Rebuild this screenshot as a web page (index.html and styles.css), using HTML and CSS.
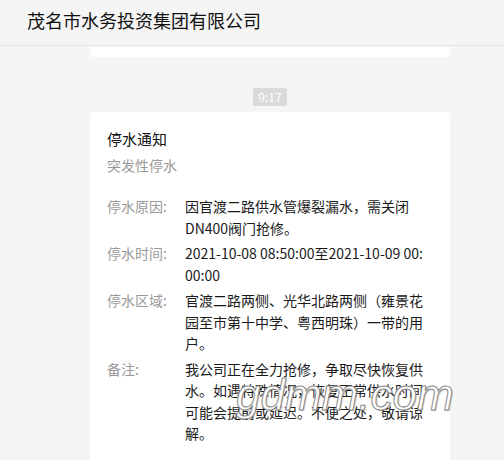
FILE: index.html
```html
<!DOCTYPE html>
<html lang="zh-CN">

<head>
  <meta charset="UTF-8">
  <meta name="viewport" content="width=device-width, initial-scale=1.0">
  <title>茂名市水务投资集团有限公司</title>
  <link rel="stylesheet" href="styles.css">
</head>

<body>
  <div class="top-bar">茂名市水务投资集团有限公司</div>

  <div class="chat">
    <div class="card card-prev"></div>

    <div class="time-row">
      <span class="time">9:17</span>
    </div>

    <div class="card">
      <div class="card-title">停水通知</div>
      <div class="card-sub">突发性停水</div>

      <ul class="info">
        <li>
          <span class="label">停水原因:</span>
          <span class="value">因官渡二路供水管爆裂漏水，需关闭DN400阀门抢修。</span>
        </li>
        <li>
          <span class="label">停水时间:</span>
          <span class="value">2021-10-08 08:50:00至2021-10-09 00:<wbr>00:00</span>
        </li>
        <li>
          <span class="label">停水区域:</span>
          <span class="value">官渡二路两侧、光华北路两侧（雍景花园至市第十中学、粤西明珠）一带的用户。</span>
        </li>
        <li>
          <span class="label">备注:</span>
          <span class="value">我公司正在全力抢修，争取尽快恢复供水。如遇特殊情况，恢复正常供水时间可能会提前或延迟。不便之处，敬请谅解。</span>
        </li>
      </ul>
    </div>
  </div>

  <!-- 图片水印 -->
  <div class="watermark">gdmm.com</div>
</body>

</html>
```

FILE: styles.css
```css
body {
  font-family: "Noto Sans CJK SC", "Liberation Sans", sans-serif;
  background-color: #f5f5f5;
  color: #1a1a1a;
  margin: 0;
  padding: 0;
  height: 460px;
  overflow: hidden;
  position: relative;
}

.top-bar {
  height: 45px;
  line-height: 40px;
  padding-left: 27px;
  font-size: 18px;
  color: #111;
  border-bottom: 1px solid #e4e4e4;
}

.chat {
  width: 360px;
  margin-left: 90px;
}

.card {
  background-color: #ffffff;
  border-radius: 4px;
  padding: 16px 17px 20px;
  margin-top: 11px;
}

.card-prev {
  height: 10px;
  padding: 0;
  margin-top: 1px;
  border-radius: 0 0 4px 4px;
}

.time-row {
  margin-top: 26px;
  text-align: center;
  height: 18px;
}

.time {
  display: inline-block;
  height: 18px;
  line-height: 18px;
  padding: 0 5px;
  font-size: 12px;
  color: #fff;
  background-color: #dadada;
  border-radius: 2px;
}

.card-title {
  font-size: 15px;
  line-height: 22px;
  color: #111;
}

.card-sub {
  font-size: 14px;
  line-height: 22px;
  margin-top: 4px;
  color: #999;
}

.info {
  list-style: none;
  padding: 0;
  margin: 20px 0 0;
  font-size: 14px;
  line-height: 21.5px;
}

.info li {
  display: flex;
  margin-bottom: 4px;
}

.info .label {
  width: 78px;
  flex-shrink: 0;
  color: #999;
}

.info .value {
  width: 248px;
  color: #1a1a1a;
}

.watermark {
  position: absolute;
  left: 236px;
  top: 373px;
  font-family: "Liberation Sans", sans-serif;
  font-style: italic;
  font-size: 44px;
  line-height: 44px;
  color: #fff;
  -webkit-text-stroke: 1px #8a8a8a;
  text-shadow: 1px 1px 1px rgba(0, 0, 0, 0.25);
}
```
